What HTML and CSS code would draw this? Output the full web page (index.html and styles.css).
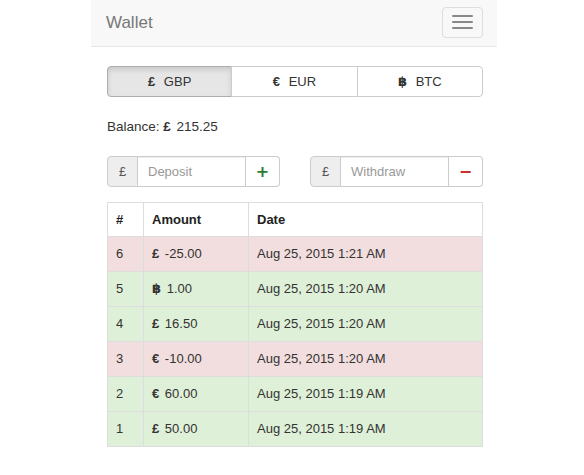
FILE: index.html
```html
<!DOCTYPE html>
<html lang="en">
<head>
<meta charset="utf-8">
<title>Wallet</title>
<link rel="stylesheet" href="styles.css">
</head>
<body>
<div class="page">
  <nav class="navbar">
    <span class="brand">Wallet</span>
    <button class="toggle" type="button" aria-label="Menu">
      <span class="bar"></span><span class="bar"></span><span class="bar"></span>
    </button>
  </nav>
  <main class="content">
    <div class="btn-group">
      <button class="btn active" type="button"><span class="sym">£</span> GBP</button>
      <button class="btn" type="button"><span class="sym">€</span> EUR</button>
      <button class="btn" type="button"><span class="sym btc">฿</span> BTC</button>
    </div>
    <p class="balance">Balance: <span class="sym">£</span> 215.25</p>
    <div class="forms">
      <div class="input-group">
        <span class="addon">£</span>
        <input class="field" type="text" placeholder="Deposit">
        <button class="action plus" type="button">+</button>
      </div>
      <div class="input-group">
        <span class="addon">£</span>
        <input class="field" type="text" placeholder="Withdraw">
        <button class="action minus" type="button">−</button>
      </div>
    </div>
    <table class="history">
      <thead>
        <tr><th class="c-num">#</th><th class="c-amt">Amount</th><th>Date</th></tr>
      </thead>
      <tbody>
        <tr class="neg"><td>6</td><td><span class="sym">£</span> -25.00</td><td>Aug 25, 2015 1:21 AM</td></tr>
        <tr class="pos"><td>5</td><td><span class="sym btc">฿</span> 1.00</td><td>Aug 25, 2015 1:20 AM</td></tr>
        <tr class="pos"><td>4</td><td><span class="sym">£</span> 16.50</td><td>Aug 25, 2015 1:20 AM</td></tr>
        <tr class="neg"><td>3</td><td><span class="sym">€</span> -10.00</td><td>Aug 25, 2015 1:20 AM</td></tr>
        <tr class="pos"><td>2</td><td><span class="sym">€</span> 60.00</td><td>Aug 25, 2015 1:19 AM</td></tr>
        <tr class="pos"><td>1</td><td><span class="sym">£</span> 50.00</td><td>Aug 25, 2015 1:19 AM</td></tr>
      </tbody>
    </table>
  </main>
</div>
</body>
</html>
```

FILE: styles.css
```css
* { box-sizing: border-box; }
html, body {
  margin: 0;
  padding: 0;
  background: #fff;
}
body {
  font-family: "Liberation Sans", Arial, sans-serif;
  font-size: 13px;
  color: #333;
}
.page {
  width: 406px;
  margin-left: calc(50% - 201px);
}
.navbar {
  height: 47px;
  background: #f8f8f8;
  border-bottom: 1px solid #e7e7e7;
  display: flex;
  align-items: center;
  justify-content: space-between;
  padding: 0 14px 0 15px;
}
.brand {
  font-size: 17px;
  color: #777;
  line-height: 20px;
}
.toggle {
  width: 41px;
  height: 31px;
  margin-top: -2px;
  border: 1px solid #ddd;
  border-radius: 4px;
  background: transparent;
  display: flex;
  flex-direction: column;
  align-items: center;
  justify-content: center;
  gap: 4px;
  padding: 0;
}
.bar {
  display: block;
  width: 21px;
  height: 2px;
  background: #888;
  border-radius: 1px;
}
.content {
  padding: 19px 14px 20px 16px;
}
.btn-group {
  display: grid;
  grid-template-columns: repeat(3, minmax(0, 1fr));
}
.btn {
  font-family: inherit;
  font-size: 13px;
  color: #333;
  background: #fff;
  border: 1px solid #ccc;
  line-height: 17px;
  padding: 6px 0;
  margin: 0;
  text-align: center;
}
.btn .sym { margin-right: 5px; }
.btn + .btn { margin-left: -1px; }
.btn:first-child { border-radius: 4px 0 0 4px; }
.btn:last-child { border-radius: 0 4px 4px 0; }
.btn.active {
  background: #e6e6e6;
  border-color: #adadad;
  box-shadow: inset 0 3px 5px rgba(0, 0, 0, 0.125);
}
.sym {
  font-weight: bold;
  margin-right: 2px;
}
.btc { font-family: "DejaVu Sans", sans-serif; font-size: 13px; }
.balance {
  margin: 20px 0 0;
  line-height: 20px;
  font-size: 13.5px;
}
.forms {
  margin-top: 19px;
  display: grid;
  grid-template-columns: minmax(0, 1fr) minmax(0, 1fr);
  gap: 30px;
}
.input-group {
  display: flex;
  height: 31px;
  min-width: 0;
}
.addon {
  width: 31px;
  flex: none;
  background: #eee;
  border: 1px solid #ccc;
  border-radius: 4px 0 0 4px;
  display: flex;
  align-items: center;
  justify-content: center;
  font-size: 13px;
  color: #555;
}
.field {
  flex: 1 1 0;
  width: 0;
  min-width: 0;
  border: 1px solid #ccc;
  border-left: 0;
  padding: 0 10px;
  margin: 0;
  font-family: inherit;
  font-size: 13px;
  color: #555;
  box-shadow: inset 0 1px 1px rgba(0, 0, 0, 0.075);
}
.field::placeholder { color: #999; }
.action {
  width: 34px;
  flex: none;
  border: 1px solid #ccc;
  border-left: 0;
  border-radius: 0 4px 4px 0;
  background: #fff;
  font-family: "DejaVu Sans", sans-serif;
  font-weight: bold;
  font-size: 16px;
  padding: 0;
  margin: 0;
  line-height: 1;
}
.plus { color: #2d7a2d; }
.minus { color: #c9302c; }
.history {
  margin-top: 15px;
  width: 100%;
  border-collapse: collapse;
  border: 1px solid #ddd;
}
.history th, .history td {
  border: 1px solid #ddd;
  padding: 8px 8px;
  line-height: 18px;
  text-align: left;
  font-size: 13px;
}
.history th {
  font-weight: bold;
  color: #222;
  background: #fff;
  padding: 8px 8px 7px;
}
.c-num { width: 36px; }
.c-amt { width: 105px; }
.history td { color: #333; }
.neg td { background: #f2dede; }
.pos td { background: #dff0d8; }
```
